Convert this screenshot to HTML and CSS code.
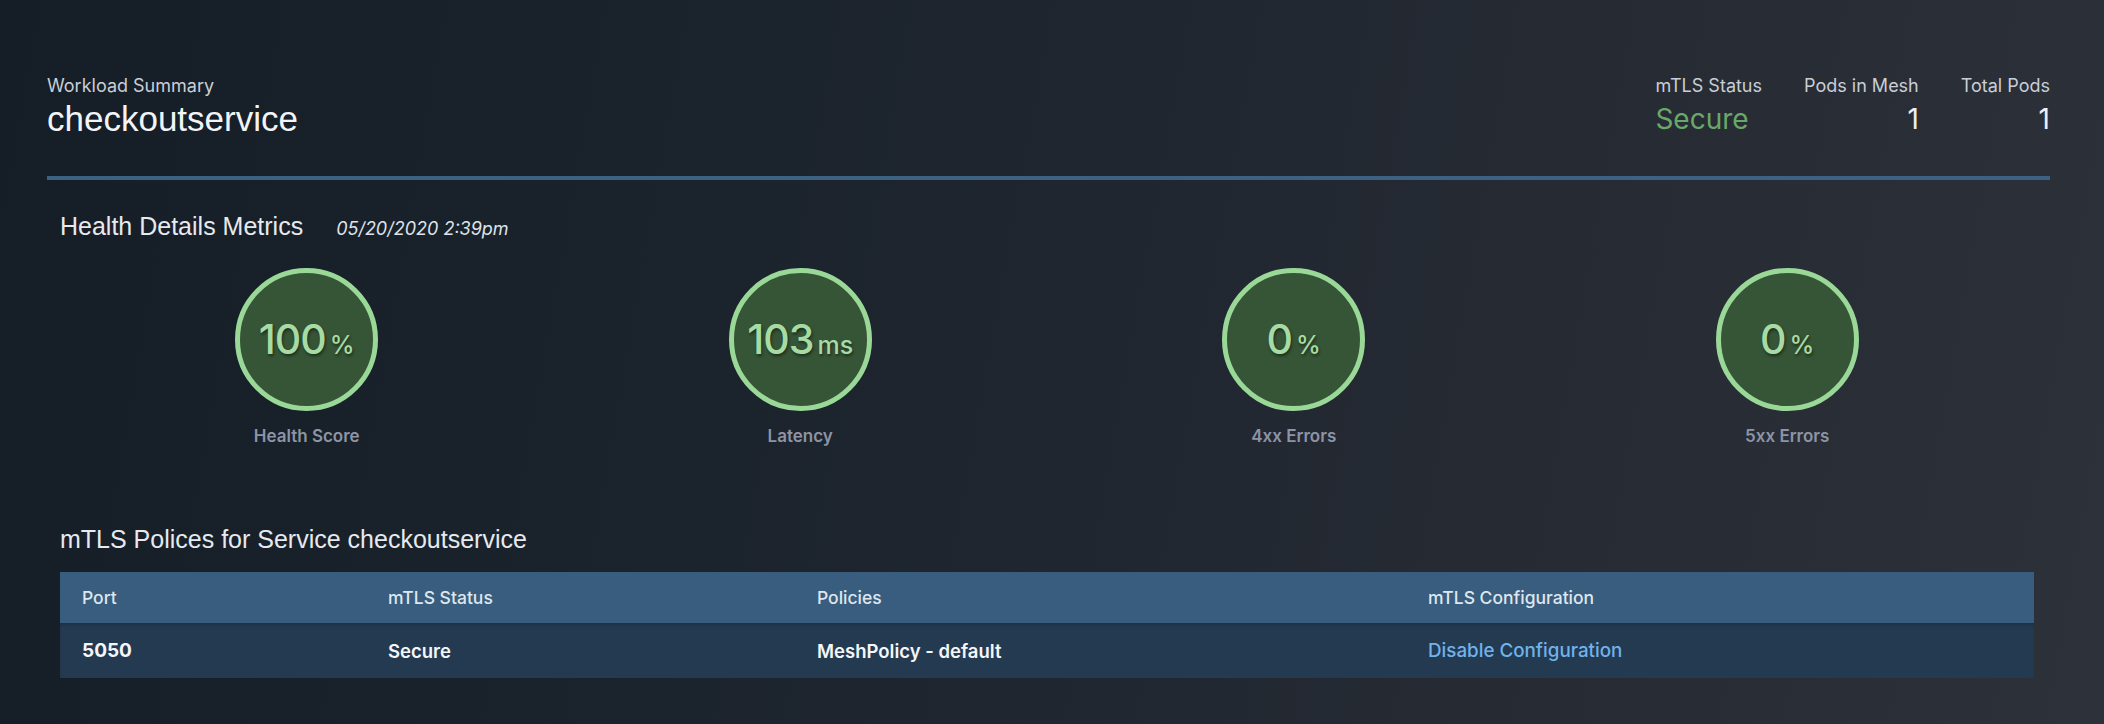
FILE: index.html
```html
<!DOCTYPE html>
<html lang="en">
<head>
<meta charset="utf-8">
<title>Workload Summary - checkoutservice</title>
<link rel="stylesheet" href="styles.css">
</head>
<body>
<div class="page">
  <header class="summary">
    <div class="summary-title">
      <div class="summary-label">Workload Summary</div>
      <h1 class="summary-name">checkoutservice</h1>
    </div>
    <div class="stats">
      <div class="stat stat-left">
        <div class="stat-label">mTLS Status</div>
        <div class="stat-value stat-secure">Secure</div>
      </div>
      <div class="stat">
        <div class="stat-label">Pods in Mesh</div>
        <div class="stat-value">1</div>
      </div>
      <div class="stat">
        <div class="stat-label">Total Pods</div>
        <div class="stat-value">1</div>
      </div>
    </div>
  </header>

  <section class="section health">
    <div class="section-head">
      <h2 class="section-title">Health Details Metrics</h2>
      <span class="section-date">05/20/2020 2:39pm</span>
    </div>
    <div class="metrics">
      <div class="metric">
        <div class="ring"><span class="ring-num">100</span><span class="ring-unit">%</span></div>
        <div class="metric-label">Health Score</div>
      </div>
      <div class="metric">
        <div class="ring"><span class="ring-num">103</span><span class="ring-unit">ms</span></div>
        <div class="metric-label">Latency</div>
      </div>
      <div class="metric">
        <div class="ring"><span class="ring-num">0</span><span class="ring-unit">%</span></div>
        <div class="metric-label">4xx Errors</div>
      </div>
      <div class="metric">
        <div class="ring"><span class="ring-num">0</span><span class="ring-unit">%</span></div>
        <div class="metric-label">5xx Errors</div>
      </div>
    </div>
  </section>

  <section class="section policies">
    <h2 class="section-title">mTLS Polices for Service checkoutservice</h2>
    <div class="table">
      <div class="row row-head">
        <div class="cell">Port</div>
        <div class="cell">mTLS Status</div>
        <div class="cell">Policies</div>
        <div class="cell">mTLS Configuration</div>
      </div>
      <div class="row row-body">
        <div class="cell cell-port">5050</div>
        <div class="cell">Secure</div>
        <div class="cell">MeshPolicy - default</div>
        <div class="cell"><a class="link" href="#">Disable Configuration</a></div>
      </div>
    </div>
  </section>
</div>
</body>
</html>
```

FILE: styles.css
```css
* { box-sizing: border-box; }

html, body {
  margin: 0;
  height: 100%;
}

body {
  font-family: Inter, "Liberation Sans", sans-serif;
  color: #e6e9ee;
  background: linear-gradient(100deg, #151d26 0%, #1b232d 35%, #252a33 70%, #2d3139 100%);
  overflow: hidden;
}

.page {
  padding: 74px 54px 0 47px;
}

/* Summary header */
.summary {
  display: flex;
  justify-content: space-between;
  align-items: flex-start;
  padding-bottom: 36px;
  border-bottom: 4px solid #3c6183;
}

.summary-label {
  font-size: 18px;
  line-height: 24px;
  color: #c9ced7;
}

.summary-name {
  margin: 0;
  font-family: "Liberation Sans", Inter, sans-serif;
  font-size: 35px;
  font-weight: 400;
  line-height: 42px;
  color: #f2f4f7;
}

.stats {
  display: flex;
  gap: 42px;
}

.stat {
  display: flex;
  flex-direction: column;
  align-items: flex-end;
}

.stat-left {
  align-items: flex-start;
}

.stat-label {
  font-size: 18px;
  line-height: 24px;
  color: #c9ced7;
}

.stat-value {
  font-size: 28px;
  line-height: 42px;
  color: #eceff3;
}

.stat-secure {
  color: #68a86b;
}

/* Sections */
.section {
  padding: 0 16px 0 13px;
}

.section-title {
  margin: 0;
  font-family: "Liberation Sans", Inter, sans-serif;
  font-size: 25px;
  font-weight: 400;
  line-height: 30px;
  color: #e6eaef;
}

.health {
  padding-top: 31px;
}

.section-head {
  display: flex;
  align-items: baseline;
  gap: 33px;
}

.section-date {
  font-size: 18px;
  font-style: italic;
  color: #dfe3e9;
}

.metrics {
  display: grid;
  grid-template-columns: repeat(4, 1fr);
  margin-top: 27px;
}

.metric {
  display: flex;
  flex-direction: column;
  align-items: center;
}

.ring {
  width: 143px;
  height: 143px;
  border-radius: 50%;
  border: 5px solid #9ad898;
  background: #365436;
  display: flex;
  align-items: baseline;
  justify-content: center;
  padding-top: 44px;
  color: #a7dba4;
  text-shadow: 1px 2px 3px rgba(0, 0, 0, 0.45);
}

.ring-num {
  font-size: 41px;
  font-weight: 500;
  line-height: 44px;
  letter-spacing: -1px;
}

.ring-unit {
  font-size: 25px;
  font-weight: 500;
  margin-left: 4px;
}

.metric-label {
  margin-top: 14px;
  font-size: 17px;
  font-weight: 600;
  line-height: 22px;
  color: #8c94a5;
}

/* Policies table */
.policies {
  padding-top: 77px;
}

.table {
  margin-top: 18px;
}

.row {
  display: grid;
  grid-template-columns: 306px 429px 611px 1fr;
  align-items: center;
}

.row-head {
  height: 51px;
  background: #385d7e;
  font-size: 17.5px;
  font-weight: 500;
  color: #dfe6ee;
}

.row-body {
  height: 55px;
  background: #243a51;
  font-size: 18.5px;
  font-weight: 600;
  color: #f4f6f8;
  box-shadow: inset 0 3px 4px -2px rgba(0, 0, 0, 0.25);
}

.cell {
  padding-left: 22px;
}

.cell-port {
  font-size: 19px;
  font-weight: 700;
}

.link {
  color: #6fb3ea;
  font-size: 18.8px;
  font-weight: 500;
  text-decoration: none;
}
```
